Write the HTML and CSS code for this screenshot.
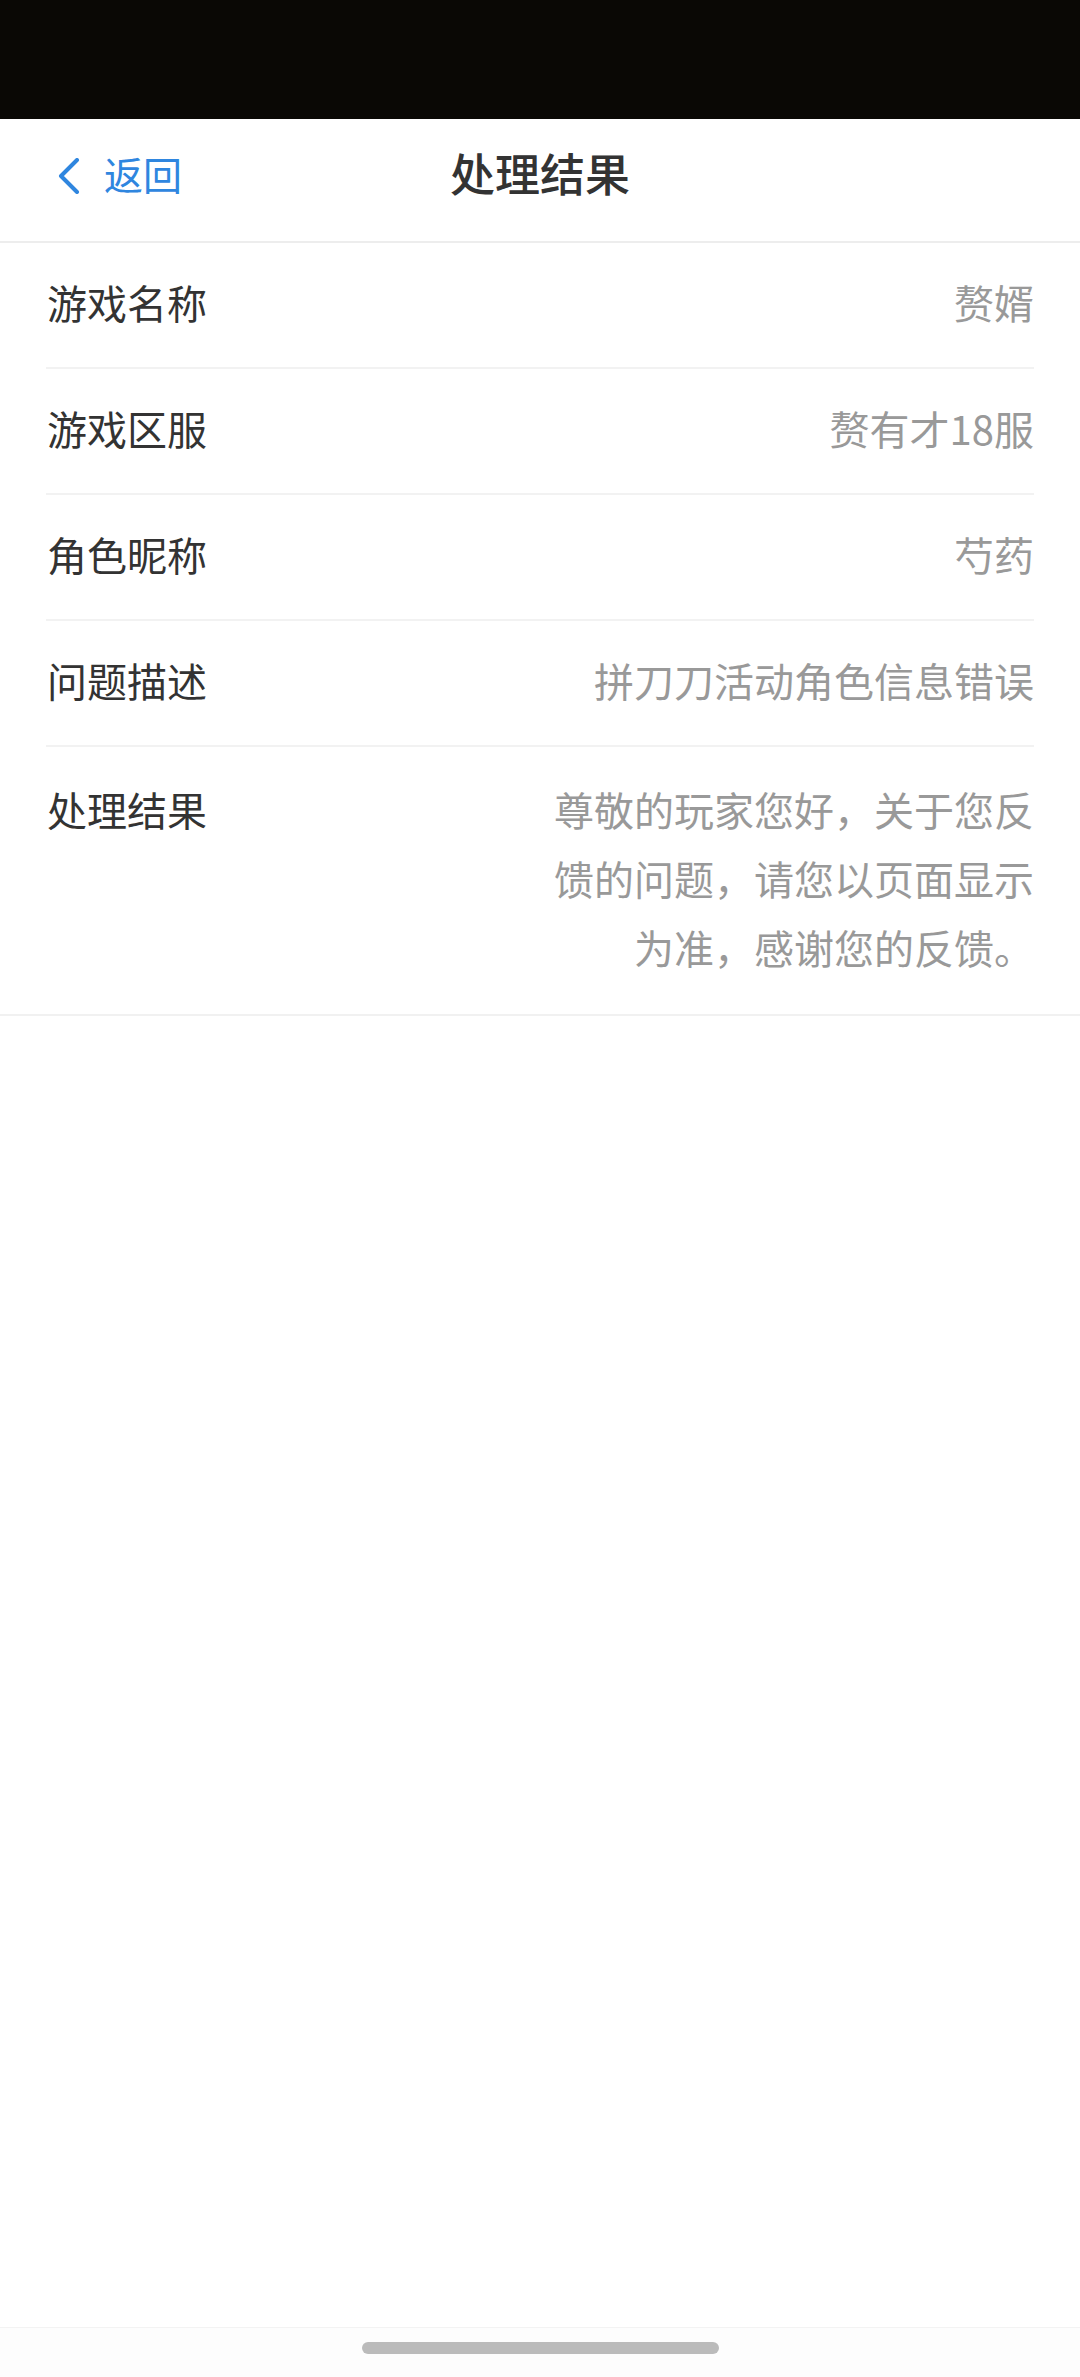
FILE: index.html
```html
<!DOCTYPE html>
<html lang="zh-CN">
<head>
<meta charset="utf-8">
<title>处理结果</title>
<link rel="stylesheet" href="styles.css">
</head>
<body>
<div class="status-bar"></div>
<header class="nav">
  <div class="back">
    <svg class="chev" width="22" height="36" viewBox="0 0 22 36"><polyline points="19,2 3,18 19,34" fill="none" stroke="#2f86df" stroke-width="4" stroke-linecap="round" stroke-linejoin="round"/></svg>
    <span class="back-text">返回</span>
  </div>
  <h1 class="title">处理结果</h1>
  <div class="nav-right"></div>
</header>
<main class="list">
  <div class="row"><span class="label">游戏名称</span><span class="value">赘婿</span></div>
  <div class="row"><span class="label">游戏区服</span><span class="value">赘有才18服</span></div>
  <div class="row"><span class="label">角色昵称</span><span class="value">芍药</span></div>
  <div class="row"><span class="label">问题描述</span><span class="value">拼刀刀活动角色信息错误</span></div>
  <div class="row row-multi"><span class="label">处理结果</span><span class="value">尊敬的玩家您好，关于您反馈的问题，请您以页面显示为准，感谢您的反馈。</span></div>
</main>
<div class="spacer"></div>
<footer class="home-bar"><div class="pill"></div></footer>
</body>
</html>
```
FILE: styles.css
```css
html, body {
  margin: 0;
  padding: 0;
  height: 100%;
}
body {
  display: flex;
  flex-direction: column;
  min-height: 100vh;
  background: #ffffff;
  font-family: "Noto Sans CJK SC", "Noto Sans", sans-serif;
  color: #333333;
}
.status-bar {
  height: 119px;
  background: #0a0805;
  flex-shrink: 0;
}
.nav {
  box-sizing: border-box;
  height: 124px;
  padding-bottom: 14px;
  flex-shrink: 0;
  display: grid;
  grid-template-columns: 1fr auto 1fr;
  align-items: center;
  border-bottom: 2px solid #ededed;
  background: #ffffff;
}
.back {
  display: flex;
  align-items: center;
  padding-left: 58px;
  gap: 24px;
  color: #2f86df;
}
.chev {
  display: block;
  margin-top: 6px;
}
.back-text {
  font-size: 39px;
  line-height: 50px;
  color: #2f86df;
}
.title {
  margin: 0;
  font-size: 45px;
  font-weight: 500;
  color: #333333;
  line-height: 60px;
}
.list {
  padding: 0 46px;
  border-bottom: 2px solid #f1f1f1;
  background: #ffffff;
}
.row {
  display: flex;
  justify-content: space-between;
  align-items: flex-start;
  padding: 25px 0 30px;
  border-bottom: 2px solid #f2f2f2;
  font-size: 40px;
  line-height: 69px;
}
.row:last-child {
  border-bottom: none;
}
.row-multi {
  padding: 28px 0 32px;
}
.label {
  color: #333333;
  white-space: nowrap;
  padding-left: 1px;
}
.value {
  color: #999999;
  text-align: right;
  max-width: 490px;
}
.spacer {
  flex: 1;
}
.home-bar {
  height: 49px;
  flex-shrink: 0;
  border-top: 1px solid #f3f3f3;
  background: #fdfdfd;
  display: flex;
  justify-content: center;
}
.pill {
  margin-top: 14px;
  width: 357px;
  height: 12px;
  border-radius: 6px;
  background: #bbbbbb;
}
```
